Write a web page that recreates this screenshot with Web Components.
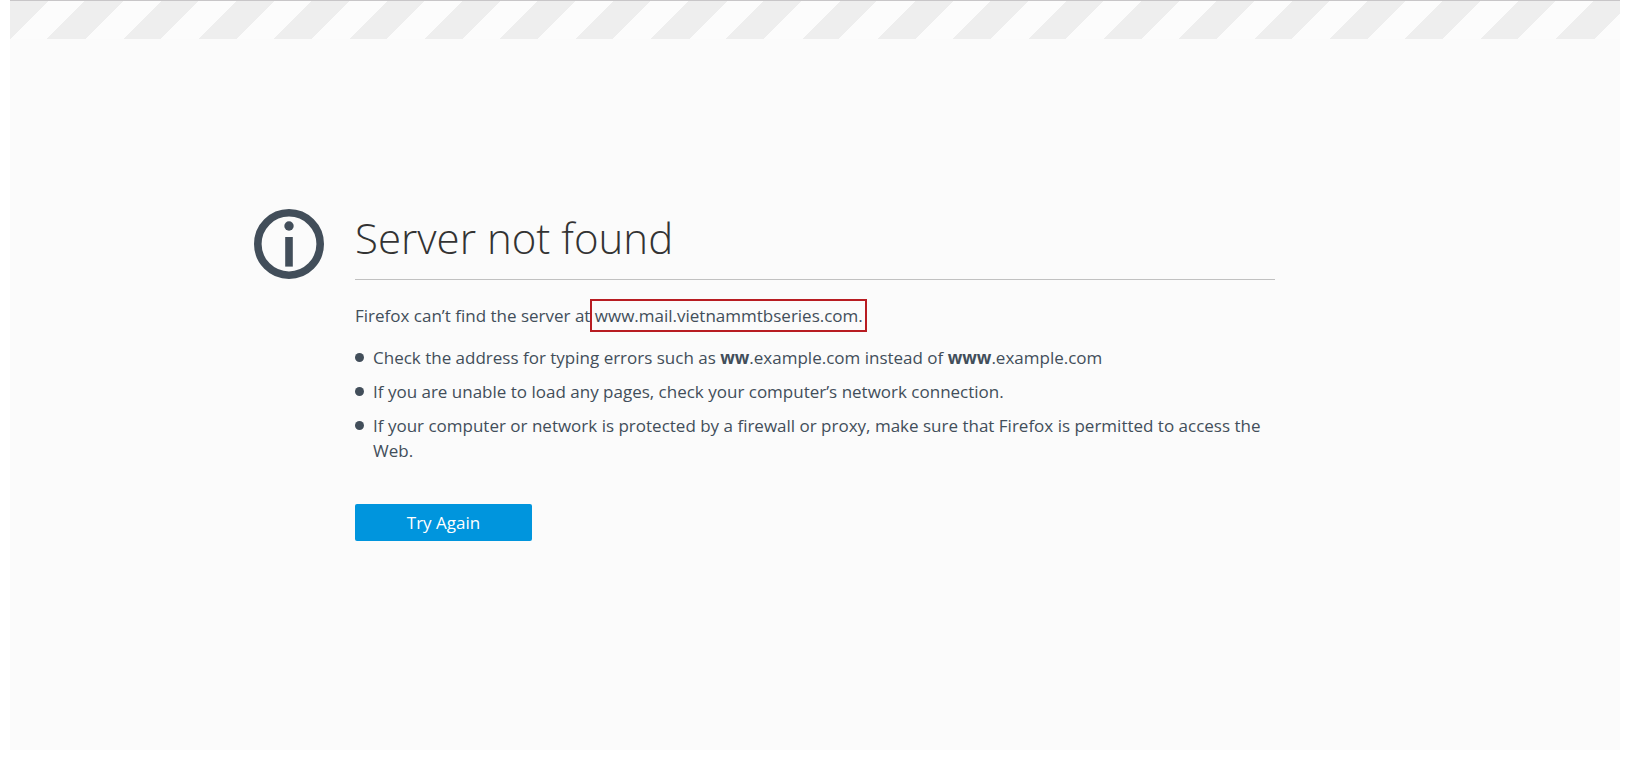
<!DOCTYPE html>
<html lang="en">
<head>
<meta charset="utf-8">
<meta name="viewport" content="width=device-width, initial-scale=1">
<title>Server not found</title>
<style>
  body {
    margin: 0; background: #fff; color: #424e5a;
    font-family: 'Open Sans', 'Noto Sans', sans-serif; font-size: 17px; line-height: 25px;
  }
</style>
</head>
<body>
<error-page>
  <info-icon slot="icon"></info-icon>
  <error-title slot="title">Server not found</error-title>
  <error-message>Firefox can’t find the server at <marked-host>www.mail.vietnammtbseries.com.</marked-host></error-message>
  <hint-list>
    <hint-item>Check the address for typing errors such as <b>ww</b>.example.com instead of <b>www</b>.example.com</hint-item>
    <hint-item>If you are unable to load any pages, check your computer’s network connection.</hint-item>
    <hint-item>If your computer or network is protected by a firewall or proxy, make sure that Firefox is permitted to access the Web.</hint-item>
  </hint-list>
  <retry-button>Try Again</retry-button>
</error-page>

<script>
  function define(name, html) {
    customElements.define(name, class extends HTMLElement {
      constructor() {
        super();
        this.attachShadow({ mode: 'open' }).innerHTML = html;
      }
    });
  }

  /* <error-page>: striped bar on top, content centred below it */
  define('error-page', `
    <style>
      :host {
        display: flex; flex-direction: column; box-sizing: border-box;
        min-height: calc(100vh - 9px); margin: 0 9px 9px 10px;
        background: #fbfbfb; border-top: 1px solid #c8c6c8;
      }
      /* three stripe periods per repeat */
      .stripes {
        height: 38px;
        background: repeating-linear-gradient(135deg,
          #eee 0 27px, #fcfcfc 27px 53px, #eee 53px 80px,
          #fcfcfc 80px 107px, #eee 107px 133px, #fcfcfc 133px 160px);
      }
      main {
        flex: 1; display: grid; align-content: center;
        grid-template-columns: minmax(100px, 1fr) minmax(0, 920px) minmax(20px, 1fr);
        padding-bottom: 40px;
      }
      .icon { justify-self: end; padding-right: 31px; }
      .content { display: flex; flex-direction: column; align-items: stretch; }
    </style>
    <div class="stripes"></div>
    <main>
      <div class="icon"><slot name="icon"></slot></div>
      <div class="content"><slot name="title"></slot><slot></slot></div>
    </main>
  `);

  define('info-icon', `
    <style>
      :host { display: block; }
      svg { display: block; width: 70px; height: 70px; }
    </style>
    <svg viewBox="0 0 70 70" fill="#424e5a" aria-hidden="true">
      <circle cx="35" cy="35" r="31.2" fill="none" stroke="#424e5a" stroke-width="7.6"/>
      <circle cx="35" cy="17" r="4.7"/>
      <rect x="31.2" y="28" width="7.6" height="29.6"/>
    </svg>
  `);

  define('error-title', `
    <style>
      :host { display: block; border-bottom: 1px solid #c1c1c1; }
      h1 { margin: 0; padding-bottom: 12px; font-size: 42px; line-height: 58px; font-weight: 300; color: #333; }
    </style>
    <h1><slot></slot></h1>
  `);

  define('error-message', `
    <style>
      :host { display: block; margin-top: 23px; }
      p { margin: 0; }
    </style>
    <p><slot></slot></p>
  `);

  /* <marked-host>: red frame round the address */
  define('marked-host', `
    <style>
      :host { display: inline; margin-left: -5px; padding: 3px 2px 3px 3px; border: 2px solid #b81c22; }
    </style>
    <slot></slot>
  `);

  define('hint-list', `
    <style>
      :host { display: flex; flex-direction: column; gap: 9px; margin-top: 17px; }
    </style>
    <slot></slot>
  `);

  define('hint-item', `
    <style>
      :host { display: flex; gap: 9px; }
      .dot { flex: none; width: 9px; height: 9px; margin-top: 8px; border-radius: 50%; background: #424e5a; }
    </style>
    <span class="dot"></span>
    <span><slot></slot></span>
  `);

  define('retry-button', `
    <style>
      :host { display: block; margin-top: 41px; }
      button {
        min-width: 177px; padding: 6px 20px; border: none; border-radius: 2px;
        background: #0095dd; color: #fff; font: inherit; cursor: pointer;
      }
      button:hover { background: #008acb; }
    </style>
    <button type="button"><slot></slot></button>
  `);

  /* reload only when the button itself is pressed */
  document.querySelector('retry-button').shadowRoot.querySelector('button')
    .addEventListener('click', () => location.reload());
</script>
</body>
</html>
